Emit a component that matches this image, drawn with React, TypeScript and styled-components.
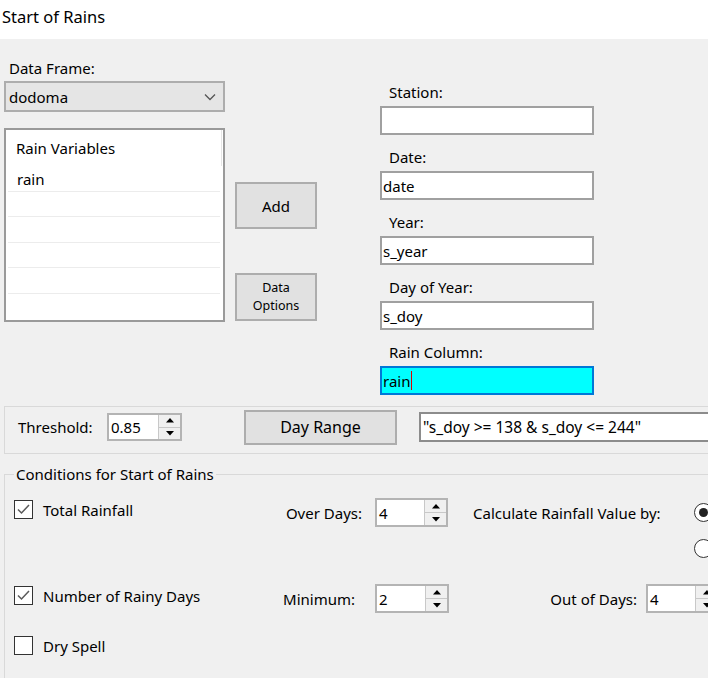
import React from "react";
import styled, { createGlobalStyle } from "styled-components";

const GlobalStyle = createGlobalStyle`
  html, body { margin: 0; padding: 0; }
  body {
    background: #f0f0f0;
    font-family: "Noto Sans", "Segoe UI", sans-serif;
    font-size: 15px;
    color: #000;
    overflow: hidden;
  }
`;

const Window = styled.div`
  width: 708px;
  height: 678px;
  overflow: hidden;
  background: #f0f0f0;
`;

const TitleBar = styled.div`
  height: 39px;
  background: #fff;
  padding: 5px 0 0 2px;
  box-sizing: border-box;
  font-size: 16.5px;
  line-height: 24px;
`;

const Body = styled.div`
  padding-left: 4px;
`;

const TopArea = styled.div`
  display: flex;
  align-items: flex-start;
  padding-top: 19px;
`;

const LeftCol = styled.div`
  width: 221px;
  display: flex;
  flex-direction: column;
`;

const FieldLabel = styled.div<{ $indent?: number }>`
  padding-left: ${(p) => p.$indent ?? 5}px;
  line-height: 20px;
  height: 20px;
  margin-bottom: ${(p) => (p.$indent ? 4 : 3)}px;
  white-space: nowrap;
`;

const Combo = styled.div`
  height: 31px;
  box-sizing: border-box;
  border: 2px solid #adadad;
  background: #e5e5e5;
  display: flex;
  align-items: center;
  justify-content: space-between;
  padding: 0 7px 0 3px;
  margin-bottom: 16px;
`;

const ListView = styled.div`
  height: 194px;
  box-sizing: border-box;
  border: 2px solid #9a9a9a;
  background: #fff;
  display: flex;
  flex-direction: column;
  overflow: hidden;
`;

const ListHeader = styled.div`
  height: 36px;
  flex: none;
  width: 216px;
  box-sizing: border-box;
  border-right: 1px solid #e5e5e5;
  padding-left: 10px;
  display: flex;
  align-items: center;
`;

const ListRow = styled.div`
  height: 25.5px;
  flex: none;
  box-sizing: border-box;
  margin: 0 3px 0 2px;
  border-bottom: 1px solid #ececec;
  padding: 0 0 2px 9px;
  display: flex;
  align-items: flex-end;
`;

const ButtonCol = styled.div`
  margin-left: 10px;
  width: 82px;
  display: flex;
  flex-direction: column;
`;

const Button = styled.div<{ $w: number; $h: number; $mt?: number; $ml?: number; $fs?: number }>`
  width: ${(p) => p.$w}px;
  height: ${(p) => p.$h}px;
  margin-top: ${(p) => p.$mt ?? 0}px;
  margin-left: ${(p) => p.$ml ?? 0}px;
  box-sizing: border-box;
  border: 2px solid #adadad;
  background: #e1e1e1;
  display: flex;
  align-items: center;
  justify-content: center;
  text-align: center;
  flex: none;
  font-size: ${(p) => p.$fs ?? 15}px;
  line-height: ${(p) => ((p.$fs ?? 15) < 14 ? 18 : 20)}px;
`;

const FieldCol = styled.div`
  margin-left: 63px;
  width: 214px;
  padding-top: 24px;
  display: flex;
  flex-direction: column;
`;

const TextBox = styled.div<{ $active?: boolean }>`
  height: 29px;
  box-sizing: border-box;
  border: 2px solid ${(p) => (p.$active ? "#0078d7" : "#a0a0a0")};
  background: ${(p) => (p.$active ? "#00ffff" : "#fff")};
  padding-left: 1px;
  display: flex;
  align-items: center;
  margin-bottom: 12px;
  white-space: nowrap;
  &:last-child {
    margin-bottom: 0;
  }
`;

const Caret = styled.span`
  display: inline-block;
  width: 1px;
  height: 19px;
  background: #e00000;
  margin-left: 1px;
`;

const ThresholdGroup = styled.div`
  margin-top: 11px;
  width: 730px;
  height: 48px;
  box-sizing: border-box;
  border: 1px solid #d9d9d9;
  display: flex;
  align-items: center;
  padding: 0 0 6px 13px;
`;

const InlineLabel = styled.div<{ $w?: number; $right?: boolean; $pr?: number; $ml?: number }>`
  width: ${(p) => (p.$w ? `${p.$w}px` : "auto")};
  margin-left: ${(p) => p.$ml ?? 0}px;
  flex: none;
  text-align: ${(p) => (p.$right ? "right" : "left")};
  padding-right: ${(p) => p.$pr ?? 0}px;
  box-sizing: border-box;
  white-space: nowrap;
`;

const SpinBox = styled.div<{ $w: number; $h?: number; $ml?: number }>`
  width: ${(p) => p.$w}px;
  height: ${(p) => p.$h ?? 29}px;
  margin-left: ${(p) => p.$ml ?? 0}px;
  flex: none;
  box-sizing: border-box;
  border: 2px solid #b4b4b4;
  background: #fff;
  display: flex;
`;

const SpinValue = styled.div`
  flex: 1;
  padding-left: 2px;
  display: flex;
  align-items: center;
`;

const SpinButtons = styled.div`
  width: 21px;
  flex: none;
  display: flex;
  flex-direction: column;
  border-left: 1px solid #c8c8c8;
  background: #f0f0f0;
`;

const SpinBtn = styled.div<{ $down?: boolean }>`
  flex: 1;
  display: flex;
  align-items: center;
  justify-content: center;
  border-top: ${(p) => (p.$down ? "1px solid #c8c8c8" : "none")};
`;

const DayRangeField = styled.div`
  margin-left: 22px;
  width: 300px;
  height: 30px;
  flex: none;
  box-sizing: border-box;
  border: 2px solid #8c8c8c;
  border-right: none;
  background: #fff;
  display: flex;
  align-items: center;
  padding-left: 2px;
  white-space: nowrap;
  font-size: 15.5px;
`;

const Conditions = styled.fieldset`
  margin: 10px 0 0 0;
  padding: 0 0 0 9px;
  width: 730px;
  height: 260px;
  box-sizing: border-box;
  border: 1px solid #d9d9d9;
  min-width: 0;
`;

const Legend = styled.legend`
  margin-left: 0;
  padding: 0 2px;
  line-height: 20px;
`;

const Row = styled.div<{ $mt: number; $h: number }>`
  margin-top: ${(p) => p.$mt}px;
  height: ${(p) => p.$h}px;
  display: flex;
  align-items: center;
`;

const CheckCell = styled.div<{ $mt?: number }>`
  width: 256px;
  flex: none;
  align-self: flex-start;
  margin-top: ${(p) => p.$mt ?? 0}px;
  height: 19px;
  display: flex;
  align-items: center;
  gap: 10px;
  white-space: nowrap;
`;

const CheckBox = styled.div`
  width: 19px;
  height: 19px;
  box-sizing: border-box;
  border: 1px solid #333;
  background: #fff;
  display: flex;
  align-items: center;
  justify-content: center;
  flex: none;
`;

const Radio = styled.div<{ $ml?: number }>`
  width: 19px;
  height: 19px;
  margin-left: ${(p) => p.$ml ?? 0}px;
  box-sizing: border-box;
  border: 1px solid #333;
  border-radius: 50%;
  background: #fff;
  display: flex;
  align-items: center;
  justify-content: center;
  flex: none;
`;

const RadioDot = styled.div`
  width: 9px;
  height: 9px;
  border-radius: 50%;
  background: #222;
`;

const Chevron = () => (
  <svg width="12" height="8" viewBox="0 0 12 8">
    <polyline points="1,1.5 6,6.5 11,1.5" fill="none" stroke="#555" strokeWidth="1.3" />
  </svg>
);

const Arrow = ({ down }: { down?: boolean }) => (
  <svg width="8" height="5" viewBox="0 0 8 5">
    <polygon points={down ? "0,0 8,0 4,4.5" : "0,4.5 8,4.5 4,0"} fill="#000" />
  </svg>
);

const Check = () => (
  <svg width="15" height="15" viewBox="0 0 15 15">
    <polyline points="2,7.5 5.5,11 13,3" fill="none" stroke="#5a5a5a" strokeWidth="1.5" />
  </svg>
);

const Spin = ({ value, w, h, ml }: { value: string; w: number; h?: number; ml?: number }) => (
  <SpinBox $w={w} $h={h} $ml={ml}>
    <SpinValue>{value}</SpinValue>
    <SpinButtons>
      <SpinBtn>
        <Arrow />
      </SpinBtn>
      <SpinBtn $down>
        <Arrow down />
      </SpinBtn>
    </SpinButtons>
  </SpinBox>
);

const fields: { label: string; value: string; active?: boolean }[] = [
  { label: "Station:", value: "" },
  { label: "Date:", value: "date" },
  { label: "Year:", value: "s_year" },
  { label: "Day of Year:", value: "s_doy" },
  { label: "Rain Column:", value: "rain", active: true },
];

export default function App() {
  return (
    <Window>
      <GlobalStyle />
      <TitleBar>Start of Rains</TitleBar>
      <Body>
        <TopArea>
          <LeftCol>
            <FieldLabel>Data Frame:</FieldLabel>
            <Combo>
              <span>dodoma</span>
              <Chevron />
            </Combo>
            <ListView>
              <ListHeader>Rain Variables</ListHeader>
              <ListRow>rain</ListRow>
              <ListRow />
              <ListRow />
              <ListRow />
              <ListRow />
            </ListView>
          </LeftCol>
          <ButtonCol>
            <Button $w={82} $h={47} $mt={124}>
              Add
            </Button>
            <Button $w={82} $h={48} $mt={44} $fs={12.5}>
              Data
              <br />
              Options
            </Button>
          </ButtonCol>
          <FieldCol>
            {fields.map((f) => (
              <React.Fragment key={f.label}>
                <FieldLabel $indent={9}>{f.label}</FieldLabel>
                <TextBox $active={f.active}>
                  {f.value}
                  {f.active && <Caret />}
                </TextBox>
              </React.Fragment>
            ))}
          </FieldCol>
        </TopArea>

        <ThresholdGroup>
          <InlineLabel $w={89}>Threshold:</InlineLabel>
          <Spin value="0.85" w={75} h={28} />
          <Button $w={153} $h={35} $ml={62} $fs={16}>
            Day Range
          </Button>
          <DayRangeField>"s_doy &gt;= 138 &amp; s_doy &lt;= 244"</DayRangeField>
        </ThresholdGroup>

        <Conditions>
          <Legend>Conditions for Start of Rains</Legend>
          <Row $mt={13} $h={31}>
            <CheckCell $mt={3}>
              <CheckBox>
                <Check />
              </CheckBox>
              Total Rainfall
            </CheckCell>
            <InlineLabel $w={92} $right>
              Over Days:
            </InlineLabel>
            <Spin value="4" w={73} ml={13} />
            <InlineLabel $w={221} $ml={25}>
              Calculate Rainfall Value by:
            </InlineLabel>
            <Radio>
              <RadioDot />
            </Radio>
          </Row>
          <Row $mt={10} $h={21}>
            <Radio $ml={680} />
          </Row>
          <Row $mt={25} $h={29}>
            <CheckCell $mt={2}>
              <CheckBox>
                <Check />
              </CheckBox>
              Number of Rainy Days
            </CheckCell>
            <InlineLabel $w={92} $right $pr={7}>
              Minimum:
            </InlineLabel>
            <Spin value="2" w={74} ml={13} />
            <InlineLabel $w={188} $right>
              Out of Days:
            </InlineLabel>
            <Spin value="4" w={73} ml={9} />
          </Row>
          <Row $mt={23} $h={19}>
            <CheckCell>
              <CheckBox />
              Dry Spell
            </CheckCell>
          </Row>
        </Conditions>
      </Body>
    </Window>
  );
}
